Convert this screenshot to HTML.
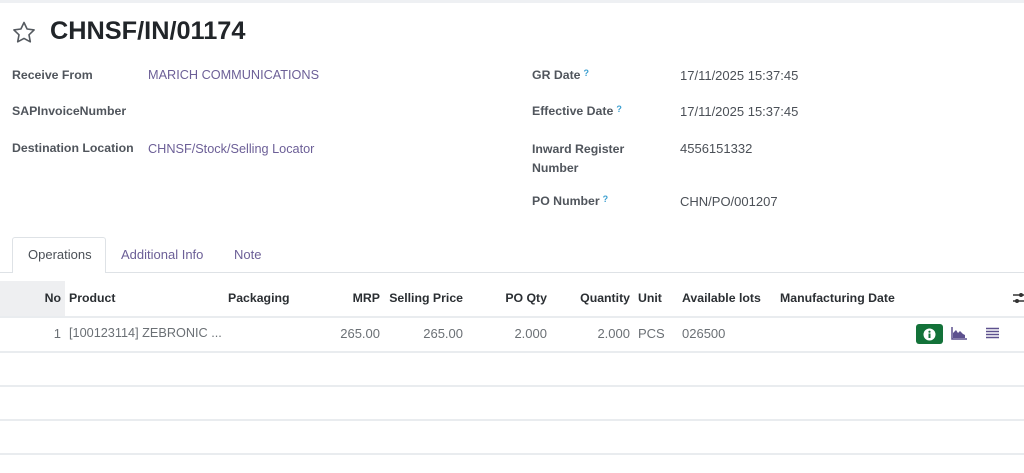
<!DOCTYPE html>
<html><head><meta charset="utf-8"><style>
*{margin:0;padding:0;box-sizing:border-box}
body{width:1024px;height:473px;overflow:hidden;background:#fff;font-family:"Liberation Sans",sans-serif;font-size:13px;color:#4b5057;position:relative}
.a{position:absolute;white-space:nowrap}
.lbl{font-weight:bold;color:#50555c;font-size:12.3px}
.lnk{color:#6c5f97}
.val{color:#4b5057}
.q{color:#3b9fd0;font-size:9px;vertical-align:top;margin-left:3px}
.th{font-weight:bold;color:#2b2f33;font-size:12.3px}
.hr{position:absolute;left:0;width:1024px;height:2px;background:#e9ecef}
.td{color:#6b7075}
</style></head><body>
<div class="hr" style="top:0;height:3px;background:#eef0f3"></div>
<svg class="a" style="left:12px;top:21px" width="24" height="22" viewBox="0 0 24 22"><path d="M12 1.5l3.1 6.5 7 .9-5.1 4.9 1.3 7L12 17.4 5.7 20.8 7 13.8 1.9 8.9l7-.9z" fill="none" stroke="#555a60" stroke-width="1.6" stroke-linejoin="round"/></svg>
<div class="a" style="left:50px;top:17px;font-size:25.3px;font-weight:bold;color:#212529">CHNSF/IN/01174</div>

<div class="a lbl" style="left:12px;top:68px">Receive From</div>
<div class="a lnk" style="left:148px;top:68px;font-size:12.7px">MARICH COMMUNICATIONS</div>
<div class="a lbl" style="left:12px;top:104px">SAPInvoiceNumber</div>
<div class="a lbl" style="left:12px;top:141px">Destination Location</div>
<div class="a lnk" style="left:148px;top:142px;font-size:12.7px">CHNSF/Stock/Selling Locator</div>

<div class="a lbl" style="left:532px;top:68px">GR Date<span class="q">?</span></div>
<div class="a val" style="left:680px;top:68px">17/11/2025 15:37:45</div>
<div class="a lbl" style="left:532px;top:104px">Effective Date<span class="q">?</span></div>
<div class="a val" style="left:680px;top:104px">17/11/2025 15:37:45</div>
<div class="a lbl" style="left:532px;top:140px;line-height:19px">Inward Register<br>Number</div>
<div class="a val" style="left:680px;top:141px">4556151332</div>
<div class="a lbl" style="left:532px;top:194px">PO Number<span class="q">?</span></div>
<div class="a val" style="left:680px;top:194px">CHN/PO/001207</div>

<div class="a" style="left:0;top:272px;width:1024px;height:1px;background:#dee2e6"></div>
<div class="a" style="left:12px;top:237px;width:94px;height:36px;border:1px solid #dee2e6;border-bottom:none;background:#fff;border-radius:3px 3px 0 0"></div>
<div class="a" style="left:28px;top:247px;color:#4b5057">Operations</div>
<div class="a lnk" style="left:121px;top:247px">Additional Info</div>
<div class="a lnk" style="left:234px;top:247px">Note</div>

<div class="a" style="left:0;top:281px;width:65px;height:36px;background:#eeeff1"></div>
<div class="a th" style="right:963px;top:291px">No</div>
<div class="a th" style="left:69px;top:291px">Product</div>
<div class="a th" style="left:228px;top:291px">Packaging</div>
<div class="a th" style="right:644px;top:291px">MRP</div>
<div class="a th" style="right:561px;top:291px">Selling Price</div>
<div class="a th" style="right:477px;top:291px">PO Qty</div>
<div class="a th" style="right:394px;top:291px">Quantity</div>
<div class="a th" style="left:638px;top:291px">Unit</div>
<div class="a th" style="left:682px;top:291px">Available lots</div>
<div class="a th" style="left:780px;top:291px">Manufacturing Date</div>
<svg class="a" style="left:1013px;top:291px" width="11" height="14" viewBox="0 0 11 14"><path d="M0 4h11M0 10h11" stroke="#333" stroke-width="1.5"/><circle cx="8" cy="4" r="2" fill="#333"/><circle cx="4" cy="10" r="2" fill="#333"/></svg>
<div class="hr" style="top:316px"></div>

<div class="a td" style="right:963px;top:326px">1</div>
<div class="a td" style="left:69px;top:326px;font-size:12.7px">[100123114] ZEBRONIC ...</div>
<div class="a td" style="right:644px;top:326px">265.00</div>
<div class="a td" style="right:561px;top:326px">265.00</div>
<div class="a td" style="right:477px;top:326px">2.000</div>
<div class="a td" style="right:394px;top:326px">2.000</div>
<div class="a td" style="left:638px;top:326px">PCS</div>
<div class="a td" style="left:682px;top:326px">026500</div>
<div class="a" style="left:916px;top:324px;width:27px;height:20px;background:#137239;border-radius:3px"></div>
<svg class="a" style="left:923px;top:328px" width="13" height="13" viewBox="0 0 13 13"><circle cx="6.5" cy="6.5" r="6" fill="#fff"/><rect x="5.5" y="5.5" width="2" height="4.5" fill="#137239"/><circle cx="6.5" cy="3.7" r="1.1" fill="#137239"/></svg>
<svg class="a" style="left:951px;top:327px" width="16" height="13" viewBox="0 0 16 13"><path d="M1 0v12h15" stroke="#5d518e" stroke-width="1.5" fill="none"/><path d="M2 11V6l3-3 2 3 2-2 3 3 2 1v3z" fill="#5d518e"/></svg>
<svg class="a" style="left:986px;top:327px" width="13" height="12" viewBox="0 0 13 12"><path d="M0 1.5h13M0 4.5h13M0 7.5h13M0 10.5h13" stroke="#5d518e" stroke-width="1.6"/></svg>

<div class="hr" style="top:351px"></div>
<div class="hr" style="top:385px"></div>
<div class="hr" style="top:419px"></div>
<div class="hr" style="top:453px"></div>
</body></html>
